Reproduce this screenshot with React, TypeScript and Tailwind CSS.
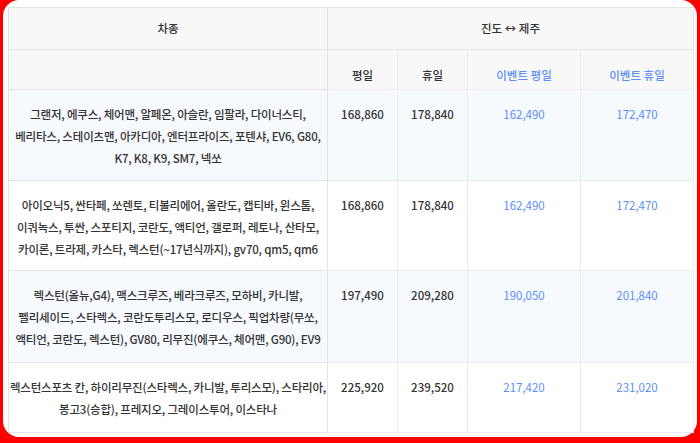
const rows = [
  {
    cars: ['그랜저, 에쿠스, 체어맨, 알페온, 아슬란, 임팔라, 다이너스티,', '베리타스, 스테이츠맨, 아카디아, 엔터프라이즈, 포텐샤, EV6, G80,', 'K7, K8, K9, SM7, 넥쏘'],
    p: ['168,860', '178,840', '162,490', '172,470'],
    bg: 'bg-[#f6f9fe]',
    h: 'h-[91px]',
  },
  {
    cars: ['아이오닉5, 싼타페, 쏘렌토, 티볼리에어, 올란도, 캡티바, 윈스톰,', '이쿼녹스, 투싼, 스포티지, 코란도, 액티언, 갤로퍼, 레토나, 산타모,', '카이론, 트라제, 카스타, 렉스턴(~17년식까지), gv70, qm5, qm6'],
    p: ['168,860', '178,840', '162,490', '172,470'],
    bg: 'bg-white',
    h: 'h-[90px]',
  },
  {
    cars: ['렉스턴(올뉴,G4), 맥스크루즈, 베라크루즈, 모하비, 카니발,', '펠리세이드, 스타렉스, 코란도투리스모, 로디우스, 픽업차량(무쏘,', '액티언, 코란도, 렉스턴), GV80, 리무진(에쿠스, 체어맨, G90), EV9'],
    p: ['197,490', '209,280', '190,050', '201,840'],
    bg: 'bg-[#f6f9fe]',
    h: 'h-[92px]',
  },
  {
    cars: ['렉스턴스포츠 칸, 하이리무진(스타렉스, 카니발, 투리스모), 스타리아,', '봉고3(승합), 프레지오, 그레이스투어, 이스타나'],
    p: ['225,920', '239,520', '217,420', '231,020'],
    bg: 'bg-white',
    h: 'h-[70px]',
  },
]

export default function App() {
  return (
    <div
      className="w-[700px] h-[443px] bg-[#f00] overflow-hidden"
      style={{ fontFamily: '"Noto Sans CJK KR", "Noto Sans", sans-serif' }}
    >
      <div className="mx-[3px] h-[437px] bg-white rounded-[16px] pt-[7px] px-[5px]">
        <table className="w-[685px] border-collapse text-[11.5px] font-medium text-[#333] table-fixed">
          <colgroup>
            <col className="w-[319px]" />
            <col className="w-[70px]" />
            <col className="w-[70px]" />
            <col className="w-[113px]" />
            <col className="w-[113px]" />
          </colgroup>
          <thead>
            <tr className="h-[42px] bg-[#f8f8f8]">
              <th className="font-medium border border-[#e4e4e4]">차종</th>
              <th colSpan={4} className="font-medium border border-[#e4e4e4]">진도 ↔ 제주</th>
            </tr>
            <tr className="h-[40px] bg-[#f8f8f8]">
              <th className="border border-[#e4e4e4]"></th>
              <th className="font-medium pt-3 border border-[#ececec]">평일</th>
              <th className="font-medium pt-3 border border-[#ececec]">휴일</th>
              <th className="font-medium pt-3 border border-[#ececec] text-[#5b8ff9]">이벤트 평일</th>
              <th className="font-medium pt-3 border border-[#ececec] text-[#5b8ff9]">이벤트 휴일</th>
            </tr>
          </thead>
          <tbody>
            {rows.map((r, i) => (
              <tr key={i} className={`${r.bg} ${r.h}`}>
                <td className="border border-[#e4e4e4] text-center leading-[22px] align-top pt-[13px] tracking-[-0.2px]">
                  {r.cars.map((c) => (
                    <div key={c}>{c}</div>
                  ))}
                </td>
                {r.p.map((v, j) => (
                  <td
                    key={j}
                    className={`border border-[#ececec] text-center align-top pt-[13px] leading-[22px] ${j > 1 ? 'text-[#5b8ff9] font-normal' : ''}`}
                  >
                    {v}
                  </td>
                ))}
              </tr>
            ))}
          </tbody>
        </table>
      </div>
    </div>
  )
}
